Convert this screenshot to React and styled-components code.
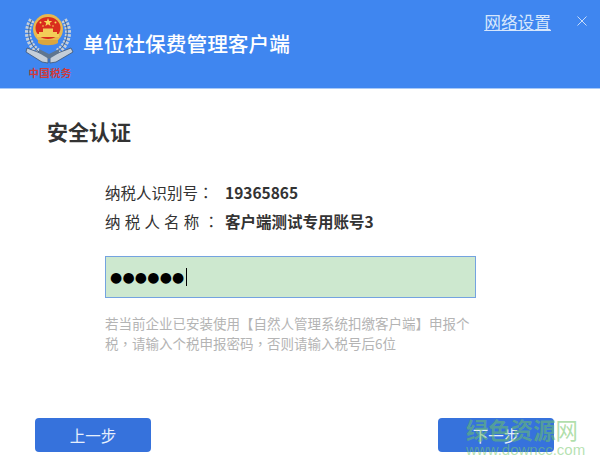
import React from "react";
import styled, { createGlobalStyle } from "styled-components";

const GlobalStyle = createGlobalStyle`
  html, body {
    margin: 0;
    padding: 0;
    background: #ffffff;
  }
  body {
    font-family: "Noto Sans CJK SC", "Noto Sans", sans-serif;
  }
`;

function Emblem() {
  return (
    <svg width="52" height="54" viewBox="0 0 52 54">
      {/* 麦穗 */}
      <path d="M8 8 C1 18 3 32 15 40" fill="none" stroke="#c6d0da" strokeWidth="6" strokeDasharray="2.5 1.2" />
      <path d="M40 8 C47 18 45 32 33 40" fill="none" stroke="#c6d0da" strokeWidth="6" strokeDasharray="2.5 1.2" />
      <path d="M8 8 C2 18 4 32 15 40" fill="none" stroke="#46607f" strokeWidth="1" />
      <path d="M40 8 C46 18 44 32 33 40" fill="none" stroke="#46607f" strokeWidth="1" />
      {/* 钥匙与盾 */}
      <path d="M3 36 L24 44 L24 51 L18 50 L2 40 Z" fill="#c4ced9" stroke="#3d5472" strokeWidth="0.8" />
      <path d="M47 36 L26 44 L26 51 L32 50 L49 40 Z" fill="#c4ced9" stroke="#3d5472" strokeWidth="0.8" />
      <path d="M15 37 L25 42 L35 37 L35 41 L25 47 L15 41 Z" fill="#5f7690" />
      {/* 国徽 */}
      <ellipse cx="24" cy="17" rx="15" ry="15" fill="#e8b84e" />
      <ellipse cx="24" cy="16" rx="12.5" ry="11" fill="#d92c1e" />
      <path d="M24 6 L25.1 9 L28.2 9.1 L25.8 11 L26.6 14 L24 12.3 L21.4 14 L22.2 11 L19.8 9.1 L22.9 9 Z" fill="#f8d75a" />
      <circle cx="16.5" cy="10.5" r="1" fill="#f8d75a" />
      <circle cx="31.5" cy="10.5" r="1" fill="#f8d75a" />
      <circle cx="19" cy="14" r="0.8" fill="#f8d75a" />
      <circle cx="29" cy="14" r="0.8" fill="#f8d75a" />
      <path d="M15 20 H33 V22 H35 V25 H13 V22 H15 Z" fill="#f3cd58" />
      <path d="M19 16.5 H29 V20 H19 Z" fill="#f3cd58" />
      <path d="M14 28 H34 V31 C29 34 19 34 14 31 Z" fill="#d9a53f" />
    </svg>
  );
}

function App() {
  return (
    <>
      <GlobalStyle />
      <Page>
        <Header>
          <LogoBlock>
            <Emblem />
            <LogoSlogan>中国税务</LogoSlogan>
          </LogoBlock>
          <AppTitle>单位社保费管理客户端</AppTitle>
          <NetLink>网络设置</NetLink>
          <CloseIcon width="10" height="10" viewBox="0 0 10 10">
            <path d="M0.5 0.5 L9.5 9.5 M9.5 0.5 L0.5 9.5" stroke="#c9dcf8" strokeWidth="1" fill="none" />
          </CloseIcon>
        </Header>
        <Main>
          <SectionTitle>安全认证</SectionTitle>
          <Form>
            <InfoRow>
              <Label>
                纳税人识别号<Punct>：</Punct>
              </Label>
              <Value>19365865</Value>
            </InfoRow>
            <InfoRow>
              <Label spaced>
                纳税人名称<Punct>：</Punct>
              </Label>
              <Value>客户端测试专用账号3</Value>
            </InfoRow>
            <PasswordBox>
              <Dots>●●●●●●</Dots>
              <Caret />
            </PasswordBox>
            <Hint>
              若当前企业已安装使用【自然人管理系统扣缴客户端】申报个
              <br />
              税<Punct>，</Punct>请输入个税申报密码<Punct>，</Punct>否则请输入税号后6位
            </Hint>
          </Form>
        </Main>
        <Footer>
          <ActionButton>上一步</ActionButton>
          <ActionButton>下一步</ActionButton>
        </Footer>
        <Watermark>
          <WatermarkName>
            绿色资源<WatermarkLast>网</WatermarkLast>
          </WatermarkName>
          <WatermarkUrl>www.downcc.com</WatermarkUrl>
        </Watermark>
      </Page>
    </>
  );
}

const Page = styled.div`
  position: relative;
  width: 600px;
  height: 468px;
  overflow: hidden;
  display: flex;
  flex-direction: column;
  background: #ffffff;
`;

const Header = styled.div`
  display: flex;
  align-items: center;
  box-sizing: border-box;
  height: 89px;
  padding: 0 13px 0 24px;
  background: #3f86f0;
  border-bottom: 1px solid #a8c9f8;
`;

const LogoBlock = styled.div`
  display: flex;
  flex-direction: column;
  align-items: center;
  width: 52px;
  margin-top: 4px;
`;

const LogoSlogan = styled.span`
  font-size: 10.5px;
  line-height: 14px;
  font-weight: 700;
  letter-spacing: 0.3px;
  white-space: nowrap;
  color: #cf3a3a;
`;

const AppTitle = styled.h1`
  position: relative;
  top: -1px;
  margin: 0 0 0 7px;
  font-size: 20.7px;
  line-height: 28px;
  font-weight: 500;
  color: #ffffff;
`;

const NetLink = styled.a`
  align-self: flex-start;
  margin: 12px 0 0 auto;
  font-size: 16.7px;
  line-height: 20px;
  color: #d6e6fc;
  text-decoration: underline;
`;

const CloseIcon = styled.svg`
  align-self: flex-start;
  margin: 16px 0 0 26px;
`;

const Main = styled.div`
  flex: 1;
  display: flex;
  flex-direction: column;
  padding: 27px 124px 0 47px;
`;

const SectionTitle = styled.h2`
  margin: 0;
  font-size: 21px;
  line-height: 30px;
  font-weight: 700;
  color: #333333;
`;

const Form = styled.div`
  display: flex;
  flex-direction: column;
  margin: 31px 0 0 58px;
`;

const InfoRow = styled.div`
  display: flex;
  align-items: center;
  height: 29px;
  color: #333333;
`;

const Label = styled.span`
  width: 120px;
  font-size: 15.5px;
  white-space: nowrap;
  letter-spacing: ${(props) => (props.spaced ? "4.2px" : "0")};
`;

const Punct = styled.span`
  font-family: "Noto Sans CJK TC", sans-serif;
`;

const Value = styled.span`
  font-size: 15.5px;
  font-weight: 700;
  white-space: nowrap;
`;

const PasswordBox = styled.div`
  display: flex;
  align-items: center;
  box-sizing: border-box;
  height: 42px;
  margin-top: 21px;
  padding-left: 4px;
  background: #cde8cf;
  border: 1px solid #74a3e0;
`;

const Dots = styled.span`
  font-family: "DejaVu Sans", sans-serif;
  font-size: 14px;
  letter-spacing: 0.2px;
  color: #000000;
`;

const Caret = styled.span`
  width: 1px;
  height: 18px;
  margin-left: 1px;
  background: #000000;
`;

const Hint = styled.p`
  margin: 15px 0 0;
  font-size: 13.5px;
  line-height: 20px;
  color: #b4b4b4;
  white-space: nowrap;
`;

const Footer = styled.div`
  display: flex;
  justify-content: space-between;
  padding: 0 46px 16px 35px;
`;

const ActionButton = styled.button`
  width: 116px;
  height: 34px;
  padding: 0;
  border: none;
  border-radius: 4px;
  background: #3672dc;
  font-family: inherit;
  font-size: 15.5px;
  color: #e6effc;
`;

const Watermark = styled.div`
  position: absolute;
  left: 466px;
  top: 416px;
  display: flex;
  flex-direction: column;
  pointer-events: none;
`;

const WatermarkName = styled.span`
  font-size: 22.4px;
  line-height: 26px;
  font-weight: 700;
  white-space: nowrap;
  color: rgba(110, 195, 100, 0.55);
`;

const WatermarkLast = styled.span`
  font-weight: 400;
`;

const WatermarkUrl = styled.span`
  font-family: "Liberation Sans", sans-serif;
  font-size: 15px;
  line-height: 15px;
  white-space: nowrap;
  color: rgba(120, 200, 110, 0.55);
`;

export default App;
